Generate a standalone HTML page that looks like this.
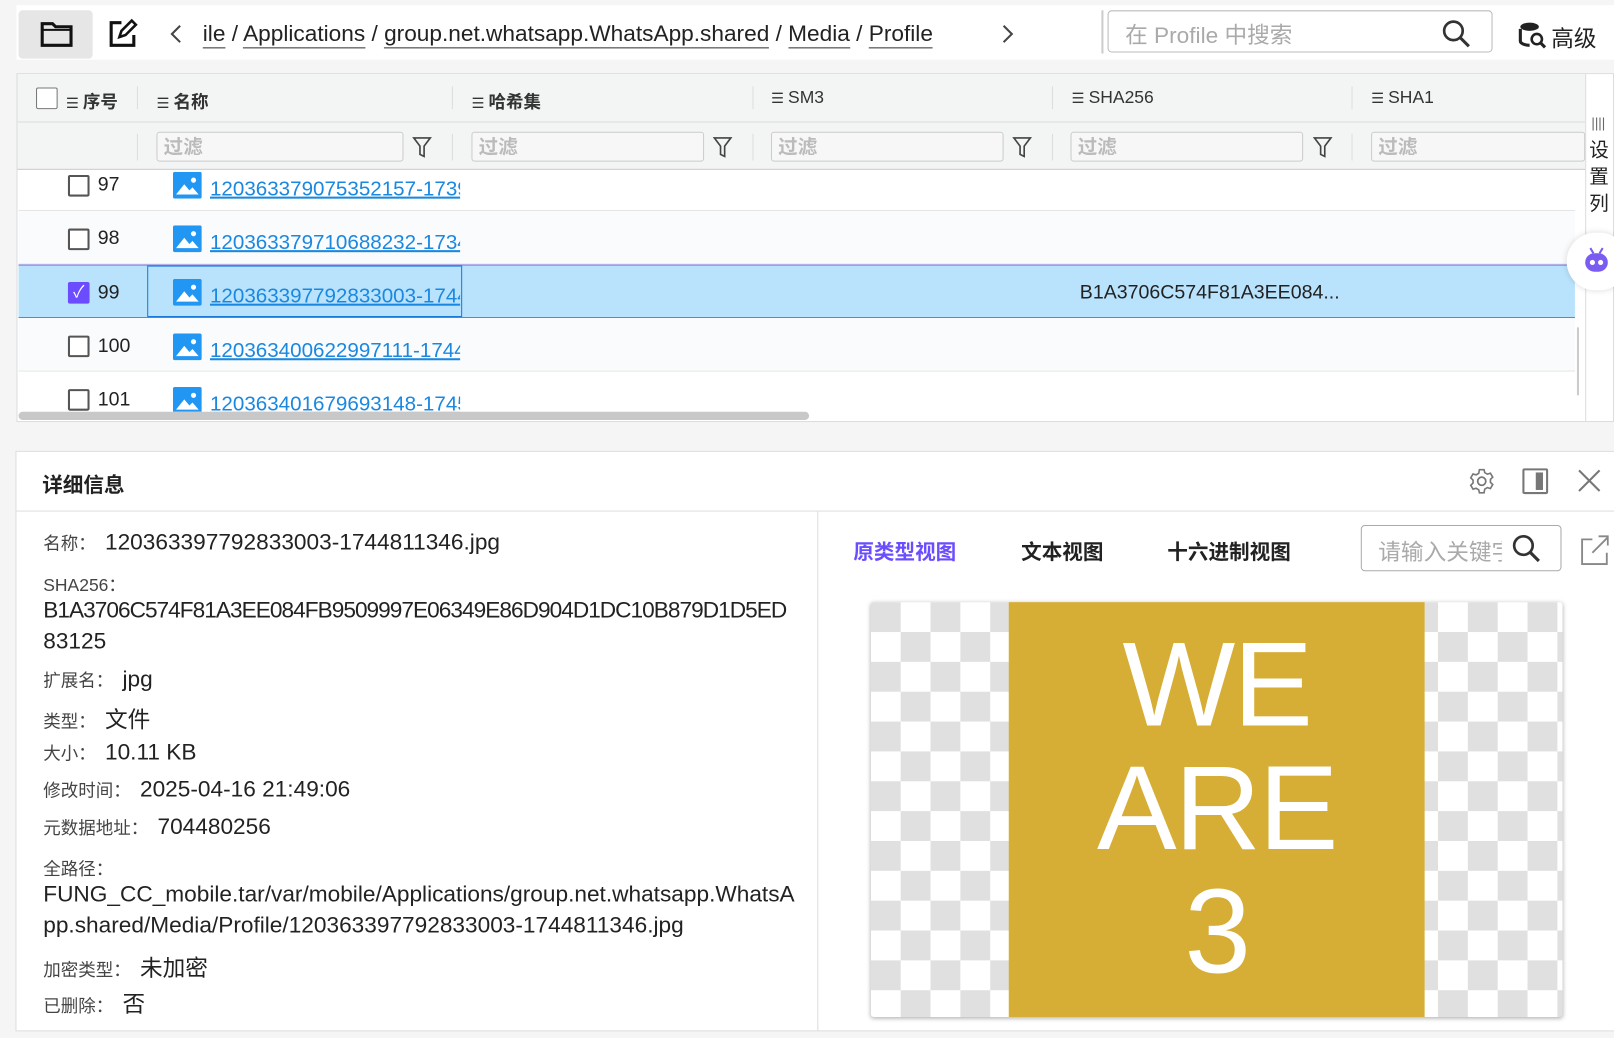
<!DOCTYPE html>
<html><head><meta charset="utf-8"><style>
*{box-sizing:border-box;margin:0;padding:0}
html,body{width:1614px;height:1037px;overflow:hidden;background:#f5f5f5}
#s{position:absolute;left:0;top:0;width:1568px;height:1008px;transform:scale(1.02934);transform-origin:0 0;font-family:"Liberation Sans","Noto Sans CJK SC",sans-serif;color:#222}
.a{position:absolute}
.bc{font-size:22px;color:#222;top:20px;white-space:nowrap}
.bc u{text-decoration:none;border-bottom:1.5px solid #333;padding-bottom:1px}
.hd{font-size:17px;color:#333;top:85px}
.hd i{font-style:normal;font-size:14px;margin-right:4px}
.hd b{font-weight:bold}
.sep{position:absolute;width:1px;background:#ddd}
.flt{position:absolute;top:128px;height:29px;border:1px solid #ccc;border-radius:3px;background:#f7f7f7;font-size:19px;font-weight:bold;color:#bbb;padding-left:6px;line-height:29px}
.fn{position:absolute;top:132px}
.cb{position:absolute;width:21px;height:21px;border:2px solid #555;border-radius:2px;background:#fff}
.row{position:absolute;left:18px;width:1512px;border-bottom:1px solid #e5e5e5}
.num{position:absolute;left:95px;font-size:19px}
.img{position:absolute;left:168px;width:28px;height:26px}
.lnk{position:absolute;left:204px;width:243px;overflow:hidden;white-space:nowrap;font-size:20px;color:#1a88e0;text-decoration:underline}
.lb{font-size:17px;color:#444;margin-right:9px}
.v{font-size:22px;color:#222}
.d{position:absolute;left:42px;white-space:nowrap}
</style></head><body><div id="s">
<svg width="0" height="0" style="position:absolute"><defs>
<symbol id="im" viewBox="0 0 28 26"><rect width="28" height="26" rx="2" fill="#2196f3"/><path d="M3 22l8-10 5 6 3-3 6 7z" fill="#fff"/><circle cx="20" cy="8" r="2.5" fill="#fff"/></symbol>
<symbol id="fu" viewBox="0 0 20 22"><path d="M2 2h16l-6 8v10l-4-2v-8z" fill="none" stroke="#444" stroke-width="1.6"/></symbol>
</defs></svg>
<!-- toolbar -->
<div class="a" style="left:16px;top:5px;width:1552px;height:53px;background:#fff"></div>
<div class="a" style="left:18px;top:10px;width:72px;height:47px;background:#e6e6e6;border-radius:4px"></div>
<svg class="a" style="left:39px;top:20px" width="32" height="26" viewBox="0 0 32 26"><path d="M2 3h10l3 3h15v18H2z" fill="none" stroke="#111" stroke-width="3"/><path d="M2 9h28" stroke="#111" stroke-width="2"/></svg>
<svg class="a" style="left:104px;top:18px" width="30" height="30" viewBox="0 0 30 30"><path d="M14 4H4v22h22V16" fill="none" stroke="#111" stroke-width="3"/><path d="M12 18l2-6 10-10 4 4-10 10z" fill="none" stroke="#111" stroke-width="2.5"/></svg>
<svg class="a" style="left:164px;top:23px" width="14" height="20"><path d="M11 2L3 10l8 8" fill="none" stroke="#444" stroke-width="2"/></svg>
<div class="a bc" style="left:197px"><u>ile</u> / <u>Applications</u> / <u>group.net.whatsapp.WhatsApp.shared</u> / <u>Media</u> / <u>Profile</u></div>
<svg class="a" style="left:972px;top:23px" width="14" height="20"><path d="M3 2l8 8-8 8" fill="none" stroke="#444" stroke-width="2"/></svg>
<div class="a" style="left:1070px;top:10px;width:2px;height:42px;background:#ccc"></div>
<div class="a" style="left:1076px;top:10px;width:374px;height:41px;border:1px solid #bbb;border-radius:4px;background:#fff"></div>
<div class="a" style="left:1093px;top:17px;font-size:22px;color:#aaa">在 Profile 中搜索</div>
<svg class="a" style="left:1400px;top:18px" width="30" height="30" viewBox="0 0 30 30"><circle cx="12" cy="12" r="9" fill="none" stroke="#333" stroke-width="2.6"/><path d="M19 19l8 8" stroke="#333" stroke-width="3"/></svg>
<svg class="a" style="left:1475px;top:20px" width="28" height="28" viewBox="0 0 28 28"><ellipse cx="11" cy="6" rx="9" ry="4" fill="#222"/><path d="M2 8v12c0 2 4 4 9 4" stroke="#222" stroke-width="3" fill="none"/><circle cx="18" cy="18" r="5" fill="#fff" stroke="#222" stroke-width="2.5"/><path d="M21 21l5 5" stroke="#222" stroke-width="3"/></svg>
<div class="a" style="left:1507px;top:20px;font-size:22px;color:#222">高级</div>
<!-- table -->
<div class="a" style="left:16px;top:71px;width:1552px;height:339px;background:#fff;border:1px solid #ddd"></div>
<div class="a" style="left:17px;top:72px;width:1523px;height:47px;background:#f3f4f4;border-bottom:1px solid #ddd"></div>
<div class="a" style="left:17px;top:119px;width:1523px;height:46px;background:#f3f4f4;border-bottom:1px solid #ccc"></div>
<div class="cb" style="left:35px;top:85px;border-color:#777;border-width:1.5px"></div>
<div class="a hd" style="left:64px"><i>☰</i><b>序号</b></div>
<div class="a hd" style="left:152px"><i>☰</i><b>名称</b></div>
<div class="a hd" style="left:458px"><i>☰</i><b>哈希集</b></div>
<div class="a hd" style="left:749px"><i>☰</i>SM3</div>
<div class="a hd" style="left:1041px"><i>☰</i>SHA256</div>
<div class="a hd" style="left:1332px"><i>☰</i>SHA1</div>
<div class="sep" style="left:133px;top:84px;height:22px"></div><div class="sep" style="left:439px;top:84px;height:22px"></div><div class="sep" style="left:731px;top:84px;height:22px"></div><div class="sep" style="left:1022px;top:84px;height:22px"></div><div class="sep" style="left:1313px;top:84px;height:22px"></div>
<div class="sep" style="left:133px;top:130px;height:26px"></div><div class="sep" style="left:439px;top:130px;height:26px"></div><div class="sep" style="left:731px;top:130px;height:26px"></div><div class="sep" style="left:1022px;top:130px;height:26px"></div><div class="sep" style="left:1313px;top:130px;height:26px"></div>
<div class="flt" style="left:152px;width:240px">过滤</div><svg class="fn" style="left:400px" width="20" height="22"><use href="#fu"/></svg>
<div class="flt" style="left:458px;width:226px">过滤</div><svg class="fn" style="left:692px" width="20" height="22"><use href="#fu"/></svg>
<div class="flt" style="left:749px;width:226px">过滤</div><svg class="fn" style="left:983px" width="20" height="22"><use href="#fu"/></svg>
<div class="flt" style="left:1040px;width:226px">过滤</div><svg class="fn" style="left:1275px" width="20" height="22"><use href="#fu"/></svg>
<div class="flt" style="left:1332px;width:208px">过滤</div>
<!-- rows -->
<div style="position:absolute;left:0;top:166px;width:1540px;height:234px;overflow:hidden">
<div class="row" style="top:-14px;height:53px"></div>
<div class="row" style="top:39px;height:52px;background:#fafbfd"></div>
<div class="row" style="top:91px;height:52px;background:#b9e3fc;border-top:1px solid #7b6cf0;border-bottom:1px solid #7b6cf0"></div>
<div class="a" style="left:143px;top:92px;width:306px;height:50px;border:1px solid #1a7ad9"></div>
<div class="row" style="top:143px;height:52px;background:#fafbfd"></div>
<div class="row" style="top:195px;height:52px"></div>
<div class="cb" style="left:66px;top:4px"></div><div class="num" style="top:3px">97</div><svg class="img" style="top:1px"><use href="#im"/></svg><div class="lnk" style="top:7px">120363379075352157-1739</div>
<div class="cb" style="left:66px;top:56px"></div><div class="num" style="top:55px">98</div><svg class="img" style="top:53px"><use href="#im"/></svg><div class="lnk" style="top:59px">120363379710688232-1734</div>
<div class="a" style="left:66px;top:108px;width:21px;height:21px;background:#6b4dff;border-radius:2px;color:#fff;font-size:16px;text-align:center;line-height:21px">✓</div><div class="num" style="top:108px">99</div><svg class="img" style="top:105px"><use href="#im"/></svg><div class="lnk" style="top:111px">120363397792833003-1744</div>
<div class="a" style="left:1049px;top:108px;font-size:19px">B1A3706C574F81A3EE084...</div>
<div class="cb" style="left:66px;top:160px"></div><div class="num" style="top:160px">100</div><svg class="img" style="top:158px"><use href="#im"/></svg><div class="lnk" style="top:164px">120363400622997111-1744</div>
<div class="cb" style="left:66px;top:212px"></div><div class="num" style="top:212px">101</div><svg class="img" style="top:210px"><use href="#im"/></svg><div class="lnk" style="top:216px">120363401679693148-1745</div>
</div>
<div class="a" style="left:18px;top:400px;width:768px;height:8px;background:#c8c8c8;border-radius:4px"></div>
<div class="a" style="left:1532px;top:318px;width:2px;height:66px;background:#ccc"></div>
<div class="a" style="left:1540px;top:72px;width:1px;height:337px;background:#ddd"></div>
<div class="a" style="left:1546px;top:112px;font-size:13px;color:#666">||||</div>
<div class="a" style="left:1544px;top:134px;font-size:19px;line-height:26px;width:20px">设<br>置<br>列</div>
<div class="a" style="left:1522px;top:226px;width:60px;height:56px;border-radius:28px;background:#fff;box-shadow:0 0 6px rgba(0,0,0,.15)"></div>
<svg class="a" style="left:1536px;top:238px" width="30" height="30" viewBox="0 0 30 30"><path d="M9 3l3 5M21 3l-3 5" stroke="#7b5cf0" stroke-width="2"/><rect x="4" y="8" width="22" height="18" rx="9" fill="#7b5cf0"/><circle cx="11" cy="17" r="2.5" fill="#fff"/><circle cx="19" cy="17" r="2.5" fill="#fff"/></svg>
<!-- detail -->
<div class="a" style="left:15px;top:438px;width:1560px;height:564px;background:#fff;border:1px solid #ddd"></div>
<div class="a" style="left:16px;top:496px;width:1552px;height:1px;background:#ddd"></div>
<div class="a" style="left:794px;top:497px;width:1px;height:504px;background:#ddd"></div>
<div class="a" style="left:41px;top:455px;font-size:20px;font-weight:bold">详细信息</div>
<svg class="a" style="left:1426px;top:454px" width="27" height="27" viewBox="0 0 24 24"><circle cx="12" cy="12" r="3.5" fill="none" stroke="#777" stroke-width="1.5"/><path d="M10 2h4l.6 2.6 2.3 1.3 2.6-.8 2 3.4-2 1.9v2.6l2 1.9-2 3.4-2.6-.8-2.3 1.3L14 22h-4l-.6-2.6-2.3-1.3-2.6.8-2-3.4 2-1.9V11l-2-1.9 2-3.4 2.6.8 2.3-1.3z" fill="none" stroke="#777" stroke-width="1.4"/></svg>
<div class="a" style="left:1479px;top:455px;width:25px;height:25px;border:2px solid #777;border-radius:2px"><div style="position:absolute;right:3px;top:2px;width:7px;height:17px;background:#777"></div></div>
<svg class="a" style="left:1532px;top:455px" width="24" height="24"><path d="M2 2l20 20M22 2L2 22" stroke="#777" stroke-width="2"/></svg>
<div class="d" style="top:514px"><span class="lb">名称：</span><span class="v">120363397792833003-1744811346.jpg</span></div>
<div class="d lb" style="top:554px">SHA256：</div>
<div class="d v" style="top:580px;letter-spacing:-0.95px">B1A3706C574F81A3EE084FB9509997E06349E86D904D1DC10B879D1D5ED</div>
<div class="d v" style="top:610px">83125</div>
<div class="d" style="top:647px"><span class="lb">扩展名：</span><span class="v">jpg</span></div>
<div class="d" style="top:682px"><span class="lb">类型：</span><span class="v">文件</span></div>
<div class="d" style="top:718px"><span class="lb">大小：</span><span class="v">10.11 KB</span></div>
<div class="d" style="top:754px"><span class="lb">修改时间：</span><span class="v">2025-04-16 21:49:06</span></div>
<div class="d" style="top:790px"><span class="lb">元数据地址：</span><span class="v">704480256</span></div>
<div class="d lb" style="top:830px">全路径：</div>
<div class="d v" style="top:856px">FUNG_CC_mobile.tar/var/mobile/Applications/group.net.whatsapp.WhatsA</div>
<div class="d v" style="top:886px">pp.shared/Media/Profile/120363397792833003-1744811346.jpg</div>
<div class="d" style="top:923px"><span class="lb">加密类型：</span><span class="v">未加密</span></div>
<div class="d" style="top:958px"><span class="lb">已删除：</span><span class="v">否</span></div>
<div class="a" style="left:829px;top:520px;font-size:20px;font-weight:bold;color:#6b4dff">原类型视图</div>
<div class="a" style="left:992px;top:520px;font-size:20px;font-weight:bold">文本视图</div>
<div class="a" style="left:1134px;top:520px;font-size:20px;font-weight:bold">十六进制视图</div>
<div class="a" style="left:1322px;top:510px;width:195px;height:45px;border:1px solid #aaa;border-radius:4px"></div>
<div class="a" style="left:1339px;top:519px;font-size:22px;color:#aaa;width:120px;overflow:hidden;white-space:nowrap">请输入关键字</div>
<svg class="a" style="left:1468px;top:518px" width="30" height="30" viewBox="0 0 30 30"><circle cx="12" cy="12" r="9" fill="none" stroke="#333" stroke-width="2.6"/><path d="M19 19l8 8" stroke="#333" stroke-width="3"/></svg>
<svg class="a" style="left:1535px;top:519px" width="28" height="30" viewBox="0 0 28 30"><path d="M12 5H2v24h24V18" fill="none" stroke="#888" stroke-width="1.8"/><path d="M12 18L27 3M18 2h9v9" fill="none" stroke="#888" stroke-width="1.8"/></svg>
<div class="a" style="left:846px;top:585px;width:672px;height:403px;box-shadow:0 1px 4px rgba(0,0,0,.3);border-radius:3px;background-color:#fff;background-image:conic-gradient(#fff 25%,#e0e0e0 0 50%,#fff 0 75%,#e0e0e0 0);background-size:58px 58px;background-position:0 0"></div>
<div class="a" style="left:980px;top:585px;width:404px;height:403px;background:#d6ae36;color:#fff;font-family:'Liberation Sans',sans-serif;text-align:center;font-size:116px;line-height:120px;padding-top:20px;font-weight:normal;letter-spacing:-2px">WE<br>ARE<br>3</div>
</div></body></html>
